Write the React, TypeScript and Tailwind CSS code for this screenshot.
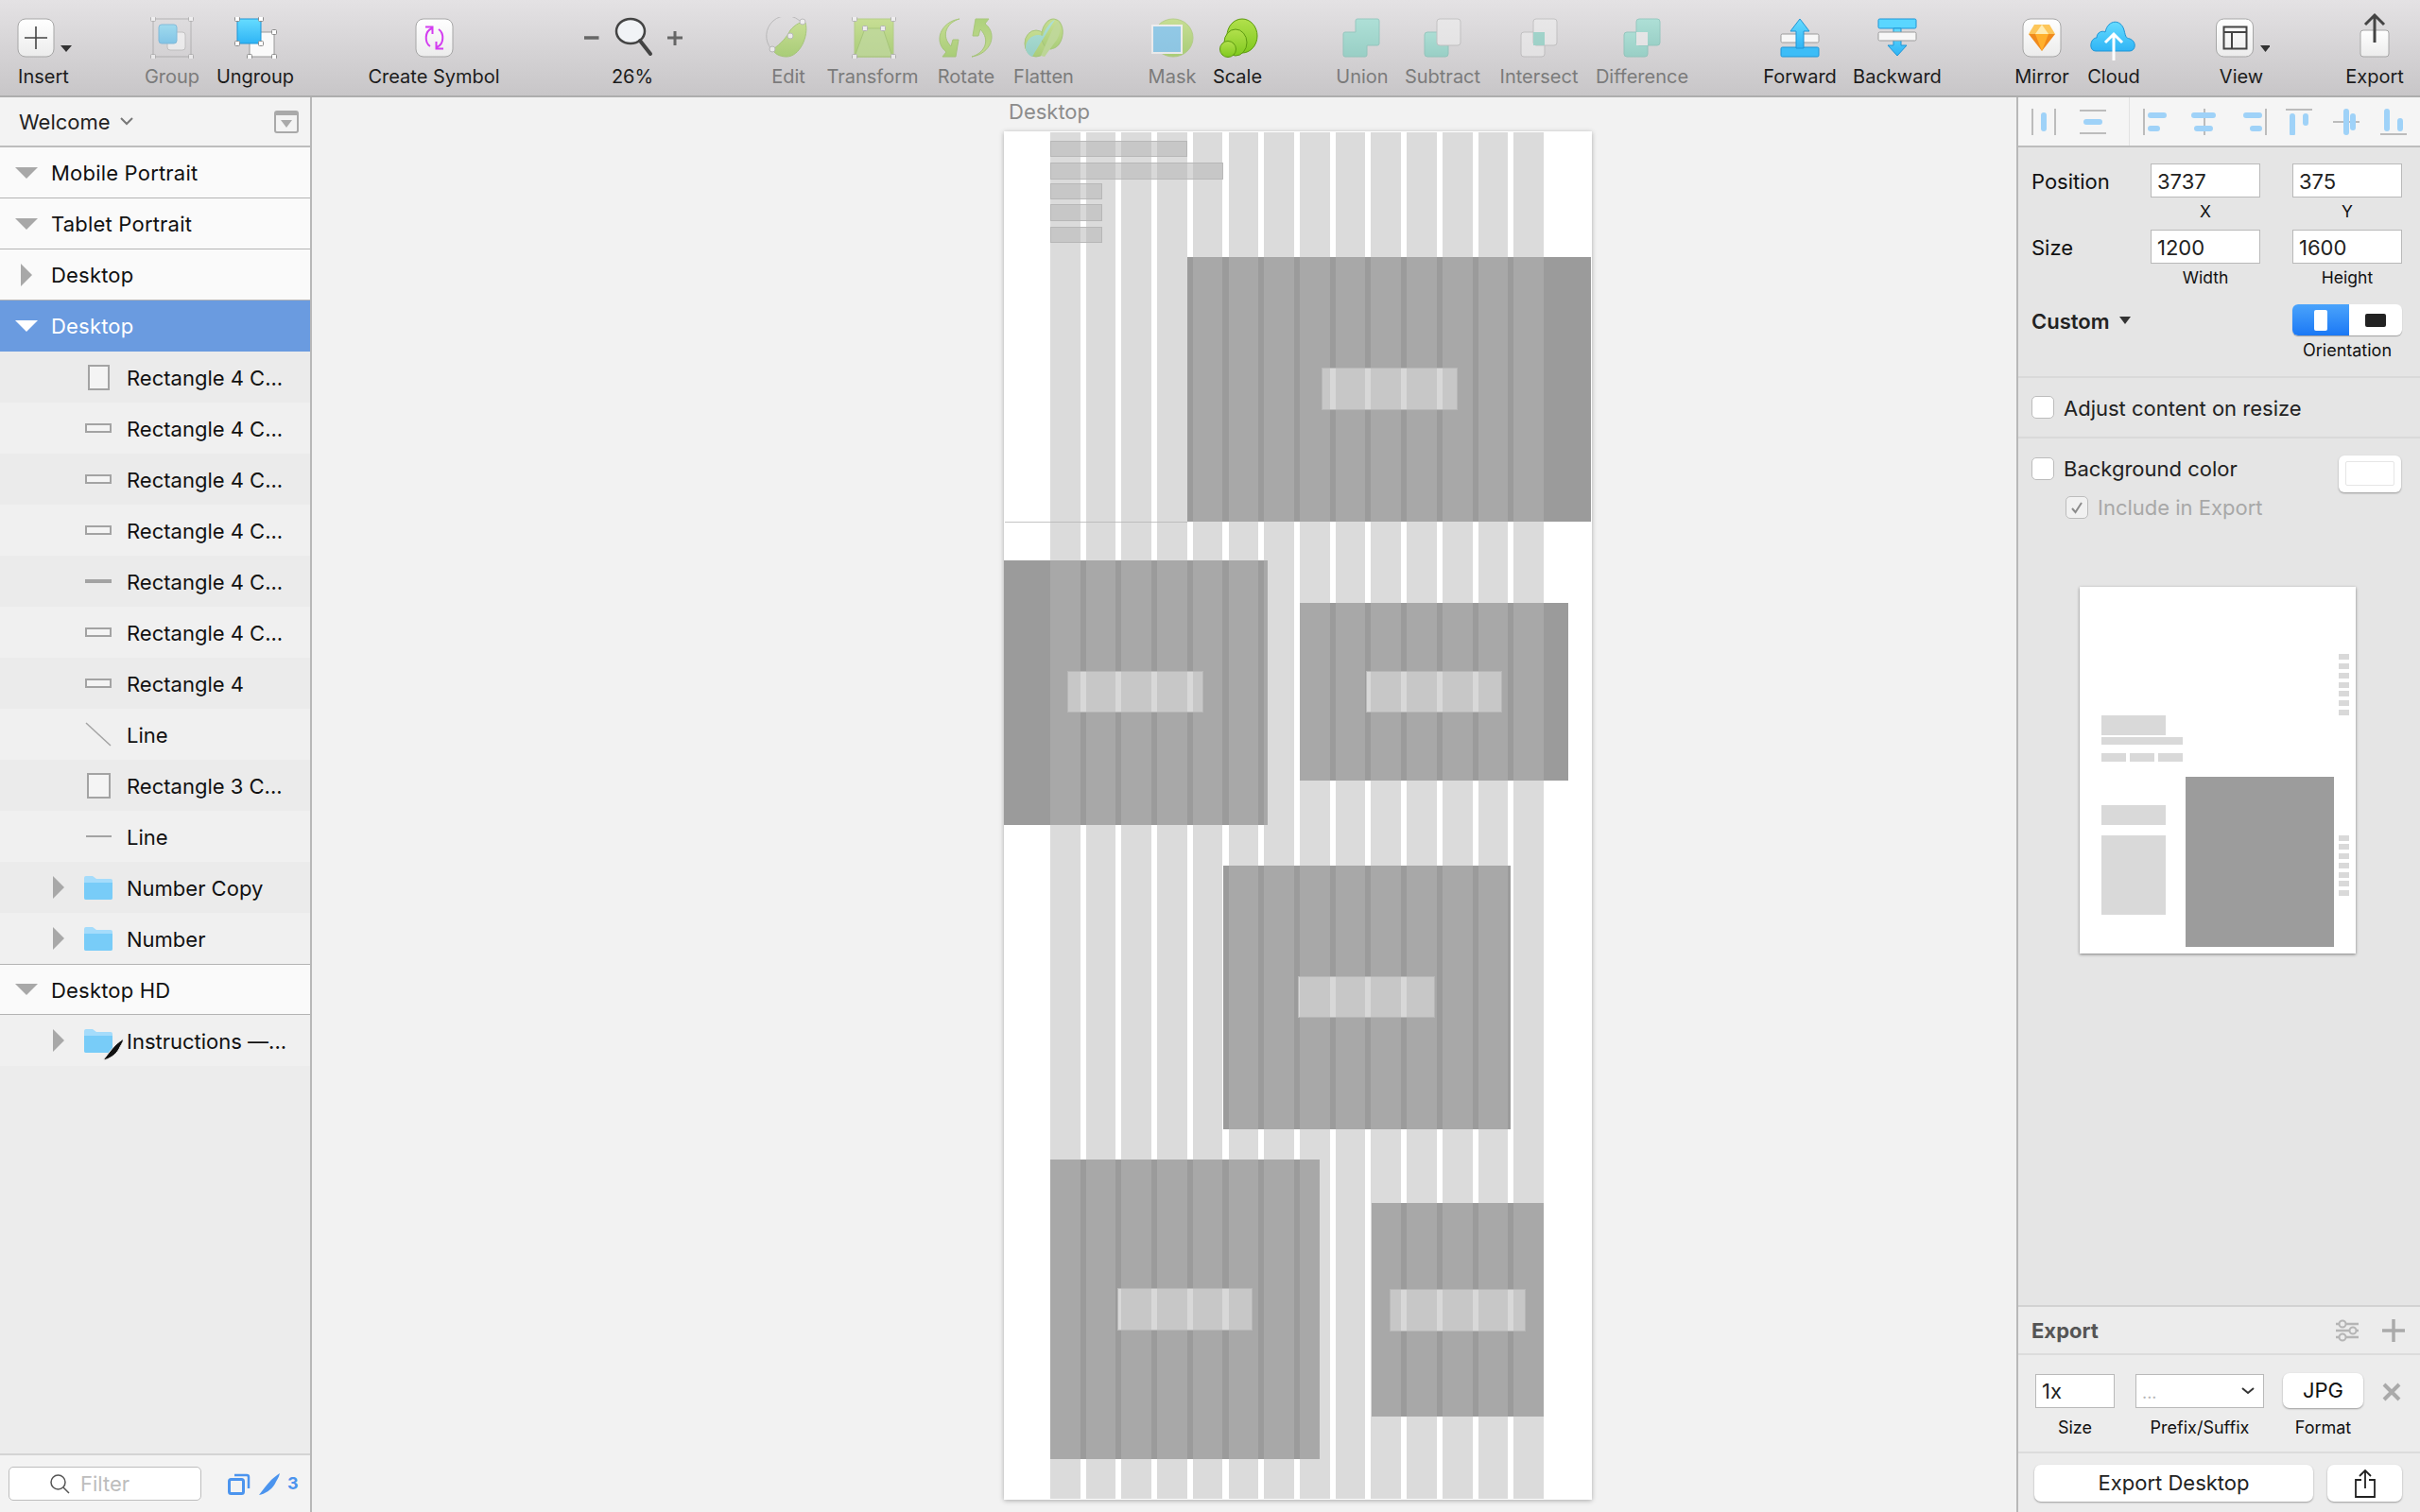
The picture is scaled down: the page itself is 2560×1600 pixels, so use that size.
import React from 'react';

const FONT = "font-['Inter','Noto_Sans',sans-serif]";

const SharedDefs = () => (
  <svg className="absolute h-0 w-0">
    <defs>
      <linearGradient id="btn" x1="0" y1="0" x2="0" y2="1">
        <stop offset="0" stopColor="#ffffff" />
        <stop offset="1" stopColor="#ececec" />
      </linearGradient>
      <linearGradient id="blue" x1="0" y1="0" x2="0" y2="1">
        <stop offset="0" stopColor="#66dcff" />
        <stop offset="1" stopColor="#2fb4f5" />
      </linearGradient>
      <linearGradient id="green" x1="0" y1="0" x2="0" y2="1">
        <stop offset="0" stopColor="#b2e04c" />
        <stop offset="1" stopColor="#7fc91e" />
      </linearGradient>
      <linearGradient id="teal" x1="0" y1="0" x2="0" y2="1">
        <stop offset="0" stopColor="#7fe3d0" />
        <stop offset="1" stopColor="#5fcdb8" />
      </linearGradient>
    </defs>
  </svg>
);

const Tool: React.FC<{ label: string; className: string; dim?: boolean; children: React.ReactNode }> = ({ label, className, dim, children }) => (
  <div className={`flex shrink-0 flex-col items-center ${className}`}>
    <div className={`mt-[18px] h-[44px] ${dim ? 'opacity-50' : ''}`}>{children}</div>
    <span className={`mt-[7px] whitespace-nowrap text-[20px] leading-[24px] ${dim ? 'text-[#7b7b7b]' : 'text-[#1c1c1c]'}`}>{label}</span>
  </div>
);

const Handle = ({ x, y }: { x: number; y: number }) => <rect x={x - 2.5} y={y - 2.5} width="5" height="5" rx="1" fill="#fff" stroke="#8c8c8c" />;

const Toolbar = () => (
  <div className="flex h-[103px] shrink-0 border-b-2 border-[#adadad] bg-gradient-to-b from-[#e4e2e4] to-[#c8c6c8]">
    <Tool label="Insert" className="w-[92px]">
      <svg width="92" height="44">
        <rect x="19" y="2" width="38" height="40" rx="8" fill="url(#btn)" stroke="#a6a6a6" />
        <path d="M38 10v24M26 22h24" stroke="#444" strokeWidth="1.6" />
        <path d="M64 30h12l-6 7z" fill="#333" />
      </svg>
    </Tool>
    <Tool label="Group" dim className="ml-[54px] w-[72px]">
      <svg width="72" height="44">
        <rect x="16" y="2" width="40" height="40" fill="none" stroke="#8c8c8c" />
        <rect x="31" y="16" width="19" height="19" rx="3" fill="#fff" stroke="#aaa" />
        <rect x="22" y="8" width="19" height="20" rx="3" fill="url(#blue)" stroke="#2d9dd8" />
        <Handle x={16} y={2} /><Handle x={56} y={2} /><Handle x={16} y={42} /><Handle x={56} y={42} />
      </svg>
    </Tool>
    <Tool label="Ungroup" className="ml-[8px] w-[88px]">
      <svg width="88" height="44">
        <rect x="38" y="16" width="26" height="26" fill="#fafafa" stroke="#9a9a9a" />
        <rect x="25" y="2" width="25" height="26" rx="1" fill="url(#blue)" stroke="#1f95d6" />
        <Handle x={25} y={2} /><Handle x={50} y={2} /><Handle x={25} y={28} /><Handle x={50} y={28} />
        <Handle x={64} y={16} /><Handle x={38} y={42} /><Handle x={64} y={42} />
      </svg>
    </Tool>
    <Tool label="Create Symbol" className="ml-[73px] w-[144px]">
      <svg width="144" height="44">
        <rect x="53" y="2" width="39" height="40" rx="8" fill="url(#btn)" stroke="#a6a6a6" />
        <path d="M70 12C62 15 62 27 68 31M63 10.500h7.500V18" fill="none" stroke="#d33df0" strokeWidth="2" />
        <path d="M75 32C83 29 83 17 77 13M82 33.500h-7.500V26" fill="none" stroke="#d33df0" strokeWidth="2" />
      </svg>
    </Tool>
    <Tool label="26%" className="ml-[78px] w-[120px]">
      <svg width="120" height="44">
        <path d="M9 22h15.5" stroke="#666" strokeWidth="3.5" />
        <ellipse cx="58" cy="15" rx="15" ry="13" fill="#f1f3f6" stroke="#444" strokeWidth="2.5" />
        <path d="M68 25l11 14" stroke="#444" strokeWidth="4" strokeLinecap="round" />
        <path d="M97 22h16M105 15v15" stroke="#666" strokeWidth="3" />
      </svg>
    </Tool>
    <Tool label="Edit" dim className="ml-[81px] w-[48px]">
      <svg width="48" height="44">
        <path d="M6 34A20 20 0 0 1 38 6" fill="none" stroke="#999" />
        <path d="M8 34C16 28 22 22 26 14C31 8 38 4 42 6C46 20 36 42 22 42C14 42 8 38 8 34Z" fill="url(#green)" stroke="#76b51f" />
        <circle cx="39" cy="5" r="3" fill="#fff" stroke="#999" /><circle cx="26" cy="20" r="3" fill="#fff" stroke="#999" /><circle cx="7" cy="34" r="3" fill="#fff" stroke="#999" />
      </svg>
    </Tool>
    <Tool label="Transform" dim className="ml-[13px] w-[104px]">
      <svg width="104" height="44">
        <rect x="33" y="2" width="41" height="40" fill="url(#green)" stroke="#8fc23a" />
        <path d="M44 12h19l10 30H33z" fill="#a5d85a" stroke="#76b51f" />
        <Handle x={33} y={2} /><Handle x={74} y={2} /><Handle x={33} y={42} /><Handle x={74} y={42} /><Handle x={44} y={12} /><Handle x={63} y={12} />
      </svg>
    </Tool>
    <Tool label="Rotate" dim className="ml-[12px] w-[70px]">
      <svg width="70" height="44">
        <path d="M28 2C14 6 8 20 19 31L21 24L27 24L24 42L10 42L14 37C0 26 8 5 28 2Z" fill="url(#green)" stroke="#76b51f" />
        <path d="M28 2C14 6 8 20 19 31L21 24L27 24L24 42L10 42L14 37C0 26 8 5 28 2Z" fill="url(#green)" stroke="#76b51f" transform="rotate(180 34.500 22)" />
      </svg>
    </Tool>
    <Tool label="Flatten" dim className="ml-[12px] w-[70px]">
      <svg width="70" height="44">
        <ellipse cx="27" cy="28" rx="12" ry="14" fill="url(#green)" stroke="#76b51f" />
        <ellipse cx="44" cy="18" rx="11" ry="16" fill="url(#green)" stroke="#76b51f" transform="rotate(10 44 18)" />
        <path d="M50 4c5 6 2 18-4 24l-10 14-4-1C38 28 44 12 50 4Z" fill="#a5d85a" />
        <path d="M47 3C41 6 36 14 34 20C25 16 15 24 16 34C17 38 20 41 23 42C30 30 40 14 47 3Z" fill="url(#teal)" />
      </svg>
    </Tool>
    <Tool label="Mask" dim className="ml-[71px] w-[60px]">
      <svg width="60" height="44">
        <ellipse cx="31" cy="22" rx="21" ry="20" fill="url(#green)" stroke="#8fc23a" />
        <rect x="9" y="9" width="31" height="29" fill="#49b9f0" stroke="#fff" strokeWidth="2" />
      </svg>
    </Tool>
    <Tool label="Scale" className="ml-[9px] w-[60px]">
      <svg width="60" height="44">
        <ellipse cx="35" cy="20" rx="16" ry="18" fill="url(#green)" stroke="#5d9a10" />
        <ellipse cx="28" cy="27" rx="12" ry="14" fill="url(#green)" stroke="#5d9a10" />
        <ellipse cx="20" cy="34" rx="8.5" ry="8.5" fill="url(#green)" stroke="#5d9a10" />
      </svg>
    </Tool>
    <Tool label="Union" dim className="ml-[70px] w-[64px]">
      <svg width="64" height="44">
        <path d="M25 4a2 2 0 0 1 2-2h21a2 2 0 0 1 2 2v24a2 2 0 0 1-2 2H37v10a2 2 0 0 1-2 2H14a2 2 0 0 1-2-2V18a2 2 0 0 1 2-2h11z" fill="url(#teal)" stroke="#52b7a4" />
      </svg>
    </Tool>
    <Tool label="Subtract" dim className="ml-[10px] w-[86px]">
      <svg width="86" height="44">
        <rect x="24" y="16" width="25" height="26" rx="3" fill="url(#teal)" stroke="#52b7a4" />
        <rect x="37" y="2" width="25" height="28" rx="3" fill="#f2f2f2" stroke="#aaa" />
      </svg>
    </Tool>
    <Tool label="Intersect" dim className="ml-[13px] w-[92px]">
      <svg width="92" height="44">
        <rect x="27" y="16" width="25" height="26" rx="3" fill="#f2f2f2" stroke="#aaa" />
        <rect x="40" y="2" width="25" height="28" rx="3" fill="#f2f2f2" stroke="#aaa" />
        <rect x="40" y="16" width="12" height="14" fill="#68cfbb" />
      </svg>
    </Tool>
    <Tool label="Difference" dim className="ml-[10px] w-[106px]">
      <svg width="106" height="44">
        <rect x="34" y="16" width="25" height="26" rx="3" fill="url(#teal)" stroke="#52b7a4" />
        <rect x="47" y="2" width="25" height="28" rx="3" fill="url(#teal)" stroke="#52b7a4" />
        <rect x="47" y="16" width="12" height="14" fill="#f2f2f2" />
      </svg>
    </Tool>
    <Tool label="Forward" className="ml-[72px] w-[84px]">
      <svg width="84" height="44">
        <rect x="22" y="18" width="40" height="9" rx="1.5" fill="#f7f7f7" stroke="#9b9b9b" />
        <rect x="22" y="32" width="40" height="10" rx="1.5" fill="#3dbdf7" stroke="#1f95d6" />
        <path d="M42 2l10 13h-6v18h-8V15h-6z" fill="url(#blue)" stroke="#1f95d6" />
      </svg>
    </Tool>
    <Tool label="Backward" className="ml-[11px] w-[100px]">
      <svg width="100" height="44">
        <rect x="30" y="2" width="40" height="10" rx="1.5" fill="#5ad6ff" stroke="#1f95d6" />
        <path d="M46 12h8v18h6L50 41 40 30h6z" fill="url(#blue)" stroke="#1f95d6" />
        <rect x="30" y="16" width="40" height="9" rx="1.5" fill="#f7f7f7" stroke="#9b9b9b" />
      </svg>
    </Tool>
    <Tool label="Mirror" className="ml-[70px] w-[66px]">
      <svg width="66" height="44">
        <rect x="13" y="2" width="40" height="40" rx="8" fill="url(#btn)" stroke="#a6a6a6" />
        <path d="M25 8h16l6 10H19z" fill="#fdc65a" />
        <path d="M33 8l-7 10h14z" fill="#feecb4" />
        <path d="M19 18h28L33 36z" fill="#f08a1c" />
        <path d="M26 18h14l-7 18z" fill="#ffb02e" />
      </svg>
    </Tool>
    <Tool label="Cloud" className="ml-[10px] w-[66px]">
      <svg width="66" height="46" className="overflow-visible">
        <path d="M14 36C6 36 8 22 15 22C15 16 21 14 24 16C27 2 41 2 44 14C46 22 46 22 50 23C58 26 56 36 50 36Z" fill="url(#blue)" stroke="#1f95d6" />
        <path d="M33 46V18M24 27l9-9 9 9" fill="none" stroke="#fff" strokeWidth="3" />
      </svg>
    </Tool>
    <Tool label="View" className="ml-[72px] w-[60px]">
      <svg width="60" height="44">
        <rect x="3.5" y="2" width="39" height="40" rx="8" fill="url(#btn)" stroke="#a6a6a6" />
        <path d="M11.5 10.500h24v23h-24zM11.500 16h24M20 16v17.500" fill="none" stroke="#444" strokeWidth="2" />
        <path d="M50 30h11l-5.500 7z" fill="#333" />
      </svg>
    </Tool>
    <Tool label="Export" className="ml-[76px] w-[70px]">
      <svg width="70" height="44" className="overflow-visible">
        <rect x="20" y="14" width="30" height="28" rx="3" fill="url(#btn)" stroke="#a6a6a6" />
        <path d="M35 27V-2M25 8L35 -2L45 8" fill="none" stroke="#444" strokeWidth="3" />
      </svg>
    </Tool>
  </div>
);

const ArrowDown = ({ color = '#a8a8a8' }: { color?: string }) => (
  <svg width="24" height="14" className="shrink-0"><path d="M0 1h24L12 13z" fill={color} /></svg>
);

const ArrowRight = () => (
  <svg width="12" height="24" className="shrink-0"><path d="M0 0l12 12L0 24z" fill="#a8a8a8" /></svg>
);

const Folder = () => (
  <svg width="30" height="25" className="shrink-0">
    <path d="M0 2a2 2 0 0 1 2-2h7l4 3h15a2 2 0 0 1 2 2v18a2 2 0 0 1-2 2H2a2 2 0 0 1-2-2z" fill="#a5dcfb" />
    <path d="M0 7h30v16a2 2 0 0 1-2 2H2a2 2 0 0 1-2-2z" fill="#78ccf8" />
  </svg>
);

const PenMark = ({ color, halo }: { color: string; halo?: boolean }) => (
  <svg width="24" height="24" className="shrink-0">
    <path d="M23 1C22 6 19 9 18 12C14 19 7 23 1 24C5 19 9 13 14 8C17 5 20 3 23 1Z" fill={color} stroke={halo ? '#f0f0f0' : 'none'} strokeWidth="1" />
  </svg>
);

const TopLayer: React.FC<{ name: string; open?: boolean; selected?: boolean; className?: string }> = ({ name, open, selected, className }) => (
  <div className={`flex h-[54px] items-center border-b ${selected ? 'border-[#6a9be0] bg-[#6a9be0] text-white' : 'border-[#b4b4b4] bg-[#fafafa] text-[#111]'} ${className ?? ''}`}>
    <div className="flex w-[54px] shrink-0 justify-center pl-[2px]">
      {open ? <ArrowDown color={selected ? '#ffffff' : '#a8a8a8'} /> : <ArrowRight />}
    </div>
    <span className="pt-[1px] text-[22px] leading-none tracking-[0.2px]">{name}</span>
  </div>
);

const SubLayer: React.FC<{ name: string; shade: boolean; icon: React.ReactNode; folder?: boolean }> = ({ name, shade, icon, folder }) => (
  <div className={`flex h-[54px] items-center ${shade ? 'bg-[#ebebeb]' : 'bg-[#f0f0f0]'}`}>
    <div className="flex w-[88px] shrink-0 justify-end pr-[20px]">{folder && <ArrowRight />}</div>
    <div className="flex w-[32px] shrink-0 justify-center">{icon}</div>
    <span className="ml-[14px] whitespace-nowrap pt-[1px] text-[22px] leading-none text-[#111]">{name}</span>
  </div>
);

const Tall = () => <div className="h-[27px] w-[23px] border-2 border-[#a3a3a3] bg-[#f4f4f4]" />;
const Wide = () => <div className="h-[10px] w-[28px] border-2 border-[#a3a3a3] bg-[#f4f4f4]" />;

const Sidebar = () => (
  <div className="flex w-[330px] shrink-0 flex-col border-r-2 border-[#b8b8b8] bg-[#ececec]">
    <div className="flex h-[53px] shrink-0 items-center border-b-2 border-[#bdbdbd] bg-[#f3f3f3] pl-[20px] pr-[12px]">
      <span className="text-[22px] leading-none text-[#222]">Welcome</span>
      <svg width="14" height="10" className="ml-[10px]"><path d="M1 1l6 6 6-6" fill="none" stroke="#777" strokeWidth="2" /></svg>
      <div className="ml-auto flex h-[24px] w-[26px] justify-center rounded-[3px] border-2 border-t-[5px] border-[#a9a9a9] pt-[5px]">
        <svg width="12" height="8"><path d="M0 0h12L6 8z" fill="#a9a9a9" /></svg>
      </div>
    </div>
    <TopLayer name="Mobile Portrait" open />
    <TopLayer name="Tablet Portrait" open />
    <TopLayer name="Desktop" />
    <TopLayer name="Desktop" open selected />
    <SubLayer name="Rectangle 4 C..." shade icon={<Tall />} />
    <SubLayer name="Rectangle 4 C..." shade={false} icon={<Wide />} />
    <SubLayer name="Rectangle 4 C..." shade icon={<Wide />} />
    <SubLayer name="Rectangle 4 C..." shade={false} icon={<Wide />} />
    <SubLayer name="Rectangle 4 C..." shade icon={<div className="h-[4px] w-[28px] bg-[#a3a3a3]" />} />
    <SubLayer name="Rectangle 4 C..." shade={false} icon={<Wide />} />
    <SubLayer name="Rectangle 4" shade icon={<Wide />} />
    <SubLayer name="Line" shade={false} icon={<svg width="28" height="26"><path d="M1 1l26 24" stroke="#a3a3a3" strokeWidth="1.5" /></svg>} />
    <SubLayer name="Rectangle 3 C..." shade icon={<div className="h-[27px] w-[25px] border-2 border-[#a3a3a3] bg-[#f4f4f4]" />} />
    <SubLayer name="Line" shade={false} icon={<div className="h-[2px] w-[27px] bg-[#a3a3a3]" />} />
    <SubLayer name="Number Copy" shade folder icon={<Folder />} />
    <SubLayer name="Number" shade={false} folder icon={<Folder />} />
    <TopLayer name="Desktop HD" open className="border-t border-t-[#b4b4b4]" />
    <div className="relative">
      <SubLayer name="Instructions —..." shade={false} folder icon={<Folder />} />
      <div className="absolute left-[108px] top-[24px]"><PenMark color="#111" halo /></div>
    </div>
    <div className="flex-1" />
    <div className="flex h-[62px] shrink-0 items-center border-t-2 border-[#d4d4d4] bg-[#f3f3f3] pl-[9px]">
      <div className="flex h-[36px] w-[204px] items-center gap-[11px] rounded-[5px] border border-[#bdbdbd] bg-white pl-[42px]">
        <svg width="22" height="22"><circle cx="9.500" cy="9.500" r="7.500" fill="none" stroke="#555" strokeWidth="1.500" /><path d="M15 15l6 6" stroke="#555" strokeWidth="1.500" /></svg>
        <span className="text-[22px] leading-none text-[#bdbdbd]">Filter</span>
      </div>
      <svg width="24" height="24" className="ml-[28px]">
        <rect x="1.500" y="7.500" width="15" height="15" rx="2" fill="none" stroke="#4b94ee" strokeWidth="3" />
        <path d="M7 3h13a2 2 0 0 1 2 2v12" fill="none" stroke="#4b94ee" strokeWidth="2.500" />
      </svg>
      <div className="ml-[8px]"><PenMark color="#4b94ee" /></div>
      <span className="ml-[7px] text-[18px] font-bold leading-none text-[#4b94ee]">3</span>
    </div>
  </div>
);

const Block = ({ className }: { className: string }) => <div className={`absolute border border-[#b9b9b9] bg-[#d8d8d8] ${className}`} />;
const Panel = ({ className }: { className: string }) => <div className={`absolute bg-[#9b9b9b] ${className}`} />;

const Canvas = () => (
  <div className="flex-1 overflow-hidden bg-[#f2f2f2] pl-[732px]">
    <div className="h-[36px] pl-[5px] pt-[3px] text-[22px] leading-[24px] text-[#8c8c8c]">Desktop</div>
    <div className="relative h-[1448px] w-[622px] bg-white shadow-[0_1px_5px_rgba(0,0,0,0.3)]">
      <Block className="left-[49px] top-[10px] h-[17px] w-[145px]" />
      <Block className="left-[49px] top-[33px] h-[18px] w-[183px]" />
      <Block className="left-[49px] top-[55px] h-[17px] w-[55px]" />
      <Block className="left-[49px] top-[77px] h-[18px] w-[55px]" />
      <Block className="left-[49px] top-[101px] h-[17px] w-[55px]" />
      <div className="absolute left-[1px] top-[413px] h-px w-[193px] bg-[#c4c4c4]" />
      <Panel className="left-[194px] top-[133px] h-[280px] w-[427px]" />
      <Block className="left-[336px] top-[250px] h-[45px] w-[144px]" />
      <Panel className="left-0 top-[454px] h-[280px] w-[279px]" />
      <Block className="left-[67px] top-[571px] h-[44px] w-[144px]" />
      <Panel className="left-[313px] top-[499px] h-[188px] w-[284px]" />
      <Block className="left-[383px] top-[571px] h-[44px] w-[144px]" />
      <Panel className="left-[232px] top-[777px] h-[279px] w-[304px]" />
      <Block className="left-[311px] top-[894px] h-[44px] w-[145px]" />
      <Panel className="left-[49px] top-[1088px] h-[317px] w-[285px]" />
      <Block className="left-[120px] top-[1224px] h-[45px] w-[143px]" />
      <Panel className="left-[389px] top-[1134px] h-[226px] w-[182px]" />
      <Block className="left-[408px] top-[1225px] h-[45px] w-[144px]" />
      <div className="absolute bottom-[1px] left-[49px] top-[1px] flex w-[522px] justify-between">
        {Array.from({ length: 14 }).map((_, i) => (
          <div key={i} className="h-full w-[31.600px] bg-[rgba(181,181,181,0.49)]" />
        ))}
      </div>
    </div>
  </div>
);

const AlignBar = ({ d, bars }: { d: string; bars: string }) => (
  <svg width="28" height="28" className="shrink-0">
    <path d={d} stroke="#a9a9a9" strokeWidth="1.500" fill="none" />
    <path d={bars} stroke="#9fd2f8" strokeWidth="6" strokeLinecap="round" fill="none" />
  </svg>
);

const Field = ({ value, caption }: { value: string; caption: string }) => (
  <div className="flex w-[116px] flex-col items-center">
    <div className="h-[36px] w-full border border-[#b9b9b9] bg-white px-[6px] pt-[1px] text-[22px] leading-[34px] text-[#222]">{value}</div>
    <span className="mt-[2px] h-[32px] text-[17.500px] leading-[26px] text-[#111]">{caption}</span>
  </div>
);

const Check = ({ checked, dim }: { checked?: boolean; dim?: boolean }) => (
  <div className={`flex h-[24px] w-[24px] shrink-0 items-center justify-center rounded-[5px] border border-[#bcbcbc] ${dim ? 'bg-[#f1f1f1]' : 'bg-white'}`}>
    {checked && <svg width="14" height="14"><path d="M2 8l3.500 4L12 2" fill="none" stroke="#8c8c8c" strokeWidth="2" /></svg>}
  </div>
);

const Mini = ({ className }: { className: string }) => <div className={`absolute bg-[#d9d9d9] ${className}`} />;

const Preview = () => (
  <div className="relative ml-[65px] mt-[72px] h-[388px] w-[292px] bg-white shadow-[0_1px_3px_rgba(0,0,0,0.45)]">
    <Mini className="left-[274px] top-[71px] h-[6px] w-[11px]" />
    <Mini className="left-[274px] top-[81px] h-[6px] w-[11px]" />
    <Mini className="left-[274px] top-[91px] h-[6px] w-[11px]" />
    <Mini className="left-[274px] top-[101px] h-[6px] w-[11px]" />
    <Mini className="left-[274px] top-[110px] h-[6px] w-[11px]" />
    <Mini className="left-[274px] top-[120px] h-[6px] w-[11px]" />
    <Mini className="left-[274px] top-[130px] h-[6px] w-[11px]" />
    <Mini className="left-[23px] top-[136px] h-[21px] w-[68px]" />
    <Mini className="left-[23px] top-[159px] h-[8px] w-[86px]" />
    <Mini className="left-[23px] top-[176px] h-[9px] w-[26px]" />
    <Mini className="left-[53px] top-[176px] h-[9px] w-[26px]" />
    <Mini className="left-[83px] top-[176px] h-[9px] w-[26px]" />
    <Mini className="left-[23px] top-[231px] h-[21px] w-[68px]" />
    <Mini className="left-[23px] top-[263px] h-[84px] w-[68px]" />
    <div className="absolute left-[112px] top-[201px] h-[180px] w-[157px] bg-[#9c9c9c]" />
    <Mini className="left-[274px] top-[263px] h-[6px] w-[11px]" />
    <Mini className="left-[274px] top-[272px] h-[6px] w-[11px]" />
    <Mini className="left-[274px] top-[282px] h-[6px] w-[11px]" />
    <Mini className="left-[274px] top-[292px] h-[6px] w-[11px]" />
    <Mini className="left-[274px] top-[302px] h-[6px] w-[11px]" />
    <Mini className="left-[274px] top-[311px] h-[6px] w-[11px]" />
    <Mini className="left-[274px] top-[321px] h-[6px] w-[11px]" />
  </div>
);

const ExportCell = ({ className, caption, children }: { className: string; caption: string; children: React.ReactNode }) => (
  <div className={`flex shrink-0 flex-col items-center ${className}`}>
    {children}
    <span className="mt-[8px] whitespace-nowrap text-[18px] leading-[26px] text-[#111]">{caption}</span>
  </div>
);

const Inspector = () => (
  <div className="flex w-[427px] shrink-0 flex-col border-l-2 border-[#b8b8b8] bg-[#e5e5e5]">
    <div className="flex h-[53px] shrink-0 items-center border-b-2 border-[#bdbdbd] bg-[#f5f5f5] pl-[13px]">
      <AlignBar d="M2 0v28M26 0v28" bars="M14 7v14" />
      <div className="ml-[24px]"><AlignBar d="M0 2h28M0 26h28" bars="M7 14h14" /></div>
      <div className="ml-[24px] mr-[14px] h-full w-px bg-[#e2e2e2]" />
      <AlignBar d="M1 0v28" bars="M8 7h14M8 21h7" />
      <div className="ml-[23px]"><AlignBar d="M14 0v28" bars="M3 7h20M6 21h14" /></div>
      <div className="ml-[24px]"><AlignBar d="M27 0v28" bars="M6 7h14M13 21h7" /></div>
      <div className="ml-[20px]"><AlignBar d="M0 1h28" bars="M7 8v18M21 8v7" /></div>
      <div className="ml-[22px]"><AlignBar d="M0 14h28" bars="M14 3v22M21 8v12" /></div>
      <div className="ml-[22px]"><AlignBar d="M0 27h28" bars="M7 3v18M21 13v8" /></div>
    </div>
    <div className="flex h-[244px] shrink-0 flex-col border-b-2 border-[#d9d9d9] pl-[14px] pt-[17px]">
      <div className="flex">
        <span className="w-[126px] pt-[3px] text-[22px] leading-[32px] text-[#111]">Position</span>
        <Field value="3737" caption="X" />
        <div className="ml-[34px]"><Field value="375" caption="Y" /></div>
      </div>
      <div className="flex">
        <span className="w-[126px] pt-[3px] text-[22px] leading-[32px] text-[#111]">Size</span>
        <Field value="1200" caption="Width" />
        <div className="ml-[34px]"><Field value="1600" caption="Height" /></div>
      </div>
      <div className="mt-[9px] flex">
        <div className="flex w-[276px] items-start pt-[4px]">
          <span className="text-[22px] font-semibold leading-[28px] text-[#222]">Custom</span>
          <svg width="12" height="8" className="ml-[10px] mt-[9px]"><path d="M0 0h12L6 8z" fill="#333" /></svg>
        </div>
        <div className="flex w-[116px] flex-col items-center">
          <div className="flex h-[33px] w-full overflow-hidden rounded-[6px] bg-white shadow-[0_1px_1px_rgba(0,0,0,0.3)]">
            <div className="flex w-[60px] items-center justify-center bg-gradient-to-b from-[#4aa3fb] to-[#1a78f5]">
              <div className="h-[22px] w-[14px] rounded-[2px] bg-white" />
            </div>
            <div className="flex flex-1 items-center justify-center">
              <div className="h-[14px] w-[22px] rounded-[2px] bg-[#222]" />
            </div>
          </div>
          <span className="mt-[3px] whitespace-nowrap text-[18px] leading-[26px] text-[#111]">Orientation</span>
        </div>
      </div>
    </div>
    <div className="flex h-[64px] shrink-0 items-center gap-[10px] border-b-2 border-[#d9d9d9] pl-[14px]">
      <Check />
      <span className="pt-[1px] text-[22px] leading-none text-[#222]">Adjust content on resize</span>
    </div>
    <div className="flex shrink-0 flex-col pl-[14px] pt-[20px]">
      <div className="flex h-[24px] items-center">
        <Check />
        <span className="ml-[10px] text-[22px] leading-none text-[#222]">Background color</span>
        <div className="ml-auto mr-[20px] mt-[10px] flex h-[39px] w-[66px] items-center justify-center rounded-[6px] bg-white shadow-[0_1px_2px_rgba(0,0,0,0.35)]">
          <div className="h-[26px] w-[52px] rounded-[2px] border border-[#e6e6e6] bg-white" />
        </div>
      </div>
      <div className="ml-[36px] mt-[17px] flex items-center gap-[10px]">
        <Check checked dim />
        <span className="text-[22px] leading-none text-[#a8a8a8]">Include in Export</span>
      </div>
    </div>
    <Preview />
    <div className="mt-auto flex h-[219px] shrink-0 flex-col border-t-2 border-[#d2d2d2] bg-[#ececec]">
      <div className="flex h-[51px] shrink-0 items-center border-b-2 border-[#dcdcdc] pl-[14px] pr-[16px]">
        <span className="text-[22px] font-bold leading-none text-[#555]">Export</span>
        <svg width="24" height="24" className="ml-auto">
          <path d="M0 5h24M0 12h24M0 19h24" stroke="#b5b5b5" strokeWidth="2.500" />
          <circle cx="7" cy="5" r="3.500" fill="#ececec" stroke="#b5b5b5" strokeWidth="2" /><circle cx="18" cy="12" r="3.500" fill="#ececec" stroke="#b5b5b5" strokeWidth="2" /><circle cx="7" cy="19" r="3.500" fill="#ececec" stroke="#b5b5b5" strokeWidth="2" />
        </svg>
        <svg width="24" height="24" className="ml-[25px]"><path d="M12 0v24M0 12h24" stroke="#aaaaaa" strokeWidth="3.500" /></svg>
      </div>
      <div className="flex h-[104px] shrink-0 items-start border-b-2 border-[#dcdcdc] pl-[18px] pt-[20px]">
        <ExportCell className="w-[84px]" caption="Size">
          <div className="h-[36px] w-full border border-[#b9b9b9] bg-white px-[6px] text-[22px] leading-[34px] text-[#222]">1x</div>
        </ExportCell>
        <ExportCell className="ml-[22px] w-[136px]" caption="Prefix/Suffix">
          <div className="flex h-[36px] w-full items-center justify-between border border-[#b9b9b9] bg-white px-[6px]">
            <span className="pt-[4px] text-[18px] leading-none text-[#b5b5b5]">...</span>
            <svg width="14" height="8" className="mr-[3px]"><path d="M1 1l6 5 6-5" fill="none" stroke="#333" strokeWidth="2" /></svg>
          </div>
        </ExportCell>
        <ExportCell className="ml-[20px] w-[85px]" caption="Format">
          <div className="mt-[-1px] h-[37px] w-full rounded-[7px] bg-white text-center text-[22px] leading-[37px] text-[#111] shadow-[0_1px_2px_rgba(0,0,0,0.35)]">JPG</div>
        </ExportCell>
        <svg width="20" height="20" className="ml-[20px] mt-[9px]"><path d="M2 2l16 16M18 2L2 18" stroke="#aaaaaa" strokeWidth="4" /></svg>
      </div>
      <div className="flex flex-1 items-start pl-[17px] pt-[12px]">
        <div className="h-[39px] w-[295px] rounded-[7px] bg-white text-center text-[22px] leading-[38px] text-[#222] shadow-[0_1px_2px_rgba(0,0,0,0.35)]">Export Desktop</div>
        <div className="ml-[15px] flex h-[39px] w-[79px] items-center justify-center rounded-[7px] bg-white shadow-[0_1px_2px_rgba(0,0,0,0.35)]">
          <svg width="22" height="30"><path d="M7 11H1v18h20V11h-6M11 20V1M5 7l6-6 6 6" fill="none" stroke="#222" strokeWidth="1.800" /></svg>
        </div>
      </div>
    </div>
  </div>
);

const App: React.FC = () => {
  return (
    <div className={`flex h-[1600px] w-[2560px] flex-col overflow-hidden ${FONT}`}>
      <SharedDefs />
      <Toolbar />
      <div className="flex min-h-0 flex-1">
        <Sidebar />
        <Canvas />
        <Inspector />
      </div>
    </div>
  );
};

export default App;
